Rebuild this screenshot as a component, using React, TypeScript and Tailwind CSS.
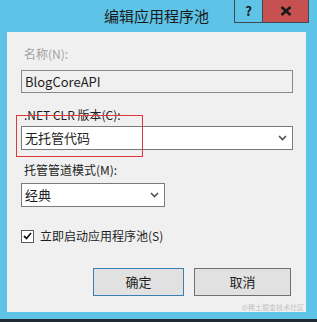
import React from 'react';

const font = { fontFamily: '"Noto Sans CJK SC", "Noto Sans", sans-serif' };

const Chevron: React.FC = () => (
  <svg width="9" height="6" viewBox="0 0 9 6" className="shrink-0">
    <polyline points="1,1 4.5,4.5 8,1" fill="none" stroke="#505050" strokeWidth="1.6" />
  </svg>
);

const App: React.FC = () => {
  return (
    <div className="w-[317px] h-[322px] bg-[#5ec3e6] flex flex-col text-[#1e1e1e]" style={font}>
      {/* Title bar */}
      <div className="relative h-[32px] shrink-0 flex items-center justify-center">
        <span className="text-[15px] leading-none pr-[4px] pb-[2px] text-[#1a1a1a]">编辑应用程序池</span>
        <div className="absolute top-0 right-[8px] flex h-[23px]">
          <div className="w-[29px] h-full border border-[#3d4a52] border-t-0 flex items-center justify-center text-[13px] font-bold text-[#1a1a1a]">?</div>
          <div className="w-[46px] h-full bg-[#c75050] border border-[#3d4a52] border-l-0 border-t-0 flex items-center justify-center">
            <svg width="12" height="10" viewBox="0 0 12 10">
              <path d="M1.5 1 L10.5 9 M10.5 1 L1.5 9" stroke="#1a1a1a" strokeWidth="2.6" />
            </svg>
          </div>
        </div>
      </div>

      {/* Content */}
      <div className="relative ml-[7px] mr-[11px] h-[280px] shrink-0 bg-[#f0f0f0] pl-[14px] pr-[14px] pt-[14px] flex flex-col">
        <div className="text-[12px] leading-[16px] text-[#a2a2a2] pl-[3px]">名称(N):</div>
        <div className="mt-[8px] w-[272px] h-[23px] border border-[#8a8a8a] bg-[#f0f0f0] flex items-center px-[3px] text-[13px]">BlogCoreAPI</div>

        <div className="mt-[14px] text-[12px] leading-[16px] pl-[3px]">.NET CLR 版本(C):</div>
        <div className="mt-[3px] w-[272px] h-[24px] border border-[#7a7a7a] bg-white flex items-center justify-between pl-[3px] pr-[5px] text-[13px]">
          <span>无托管代码</span>
          <Chevron />
        </div>

        <div className="mt-[12px] text-[12px] leading-[16px] pl-[3px]">托管管道模式(M):</div>
        <div className="mt-[5px] w-[144px] h-[24px] border border-[#7a7a7a] bg-white flex items-center justify-between pl-[3px] pr-[5px] text-[13px]">
          <span>经典</span>
          <Chevron />
        </div>

        <div className="mt-[21px] flex items-center gap-[6px]">
          <div className="w-[13px] h-[13px] border border-[#5a5a5a] bg-white flex items-center justify-center">
            <svg width="9" height="8" viewBox="0 0 9 8">
              <polyline points="1,4 3.5,6.5 8,1" fill="none" stroke="#1a1a1a" strokeWidth="1.8" />
            </svg>
          </div>
          <span className="text-[12px] leading-[16px]">立即启动应用程序池(S)</span>
        </div>

        <div className="mt-[24px] flex justify-end gap-[10px] pr-[1px]">
          <button className="w-[91px] h-[28px] bg-[#e1e1e1] border border-[#3c7fb1] text-[13px]">确定</button>
          <button className="w-[97px] h-[28px] bg-[#e1e1e1] border border-[#707070] text-[13px]">取消</button>
        </div>

        <div className="absolute right-[2px] bottom-[1px] text-[7px] leading-none text-[#c4c4c4]">@稀土掘金技术社区</div>

        {/* annotation */}
        <div className="absolute left-[9px] top-[83px] w-[127px] h-[42px] border border-[#e0393c] pointer-events-none" />
      </div>

      <div className="h-[7px] shrink-0" />
      <div className="flex-1 bg-[#1f2a35]" />
    </div>
  );
};

export default App;
